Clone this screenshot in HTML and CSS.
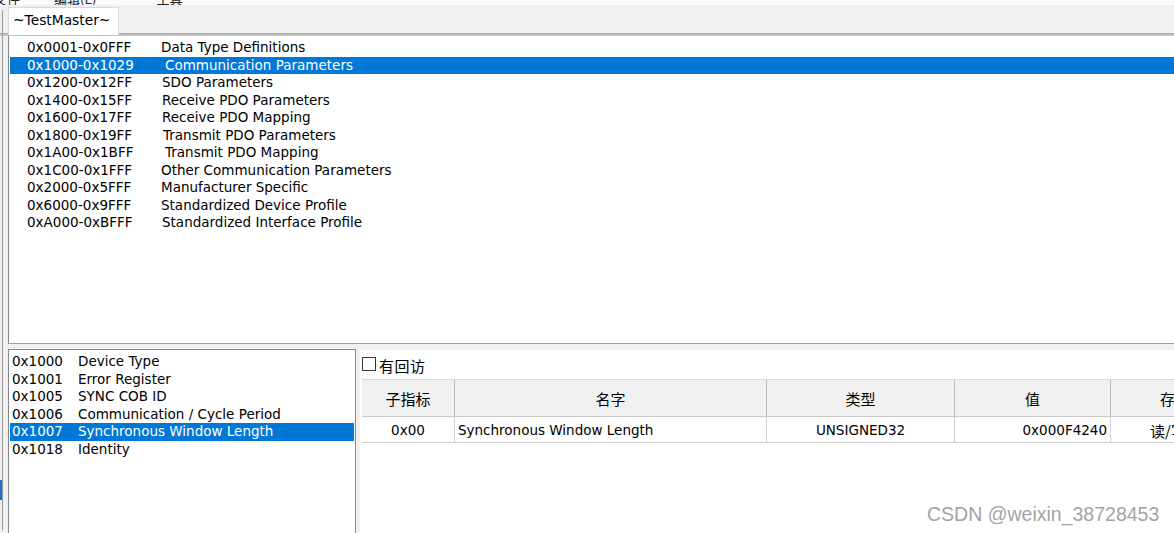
FILE: index.html
```html
<!DOCTYPE html>
<html>
<head>
<meta charset="utf-8">
<link rel="stylesheet" href="styles.css">
</head>
<body>
<div class="menubar"><span class="m1">文件</span><span class="m2">编辑(E)</span><span class="m3">工具</span></div>
<div class="tabstrip">
  <div class="tab">~TestMaster~</div>
</div>
<div class="main">
  <div class="gutter"><div class="gline"></div><div class="gblue"></div></div>
  <div class="content">
    <div class="upper">
      <div class="row"><span class="rng">0x0001-0x0FFF</span><span class="nm">Data Type Definitions</span></div>
      <div class="row sel"><span class="rng">0x1000-0x1029</span><span class="nm s4">Communication Parameters</span></div>
      <div class="row"><span class="rng">0x1200-0x12FF</span><span class="nm s1">SDO Parameters</span></div>
      <div class="row"><span class="rng">0x1400-0x15FF</span><span class="nm s1">Receive PDO Parameters</span></div>
      <div class="row"><span class="rng">0x1600-0x17FF</span><span class="nm s1">Receive PDO Mapping</span></div>
      <div class="row"><span class="rng">0x1800-0x19FF</span><span class="nm s2">Transmit PDO Parameters</span></div>
      <div class="row"><span class="rng">0x1A00-0x1BFF</span><span class="nm s4">Transmit PDO Mapping</span></div>
      <div class="row"><span class="rng">0x1C00-0x1FFF</span><span class="nm">Other Communication Parameters</span></div>
      <div class="row"><span class="rng">0x2000-0x5FFF</span><span class="nm">Manufacturer Specific</span></div>
      <div class="row"><span class="rng">0x6000-0x9FFF</span><span class="nm">Standardized Device Profile</span></div>
      <div class="row"><span class="rng">0xA000-0xBFFF</span><span class="nm s1">Standardized Interface Profile</span></div>
    </div>
    <div class="lower">
      <div class="objlist">
        <div class="orow"><span class="code">0x1000</span><span>Device Type</span></div>
        <div class="orow"><span class="code">0x1001</span><span>Error Register</span></div>
        <div class="orow"><span class="code">0x1005</span><span>SYNC COB ID</span></div>
        <div class="orow"><span class="code">0x1006</span><span>Communication / Cycle Period</span></div>
        <div class="orow sel"><span class="code">0x1007</span><span>Synchronous Window Length</span></div>
        <div class="orow"><span class="code">0x1018</span><span>Identity</span></div>
      </div>
      <div class="detail">
        <label class="check"><span class="box"></span><span class="cjk">有回访</span></label>
        <div class="table">
          <div class="thead">
            <div class="c c1 cjk">子指标</div>
            <div class="c c2 cjk">名字</div>
            <div class="c c3 cjk">类型</div>
            <div class="c c4 cjk">值</div>
            <div class="c c5 cjk">存取权限</div>
          </div>
          <div class="trow">
            <div class="c c1">0x00</div>
            <div class="c c2 left">Synchronous Window Length</div>
            <div class="c c3">UNSIGNED32</div>
            <div class="c c4 right">0x000F4240</div>
            <div class="c c5 cjk rw">读/写</div>
          </div>
        </div>
        <div class="watermark">CSDN @weixin_38728453</div>
      </div>
    </div>
  </div>
</div>
</body>
</html>
```

FILE: styles.css
```css
html, body {
  margin: 0;
  padding: 0;
  width: 1174px;
  height: 533px;
  overflow: hidden;
  background: #f0f0f0;
  font-family: "DejaVu Sans", sans-serif;
  font-size: 13.5px;
  color: #000;
}
.cjk {
  font-family: "Noto Sans CJK SC", sans-serif;
}
.menubar {
  height: 5px;
  background: #fafafa;
  overflow: hidden;
  position: relative;
  font-family: "Noto Sans CJK SC", sans-serif;
  font-size: 13px;
  line-height: 13px;
  color: #222;
}
.menubar span {
  display: inline-block;
  margin-top: -8px;
  vertical-align: top;
}
.m1 { margin-left: -6px; }
.m2 { margin-left: 34px; }
.m3 { margin-left: 60px; }
.tabstrip {
  height: 29px;
  background: #f0f0f0;
  border-bottom: 2px solid #c3c3c3;
  position: relative;
  box-shadow: inset 0 -1px 0 #a9a9b0;
}
.tab {
  position: absolute;
  left: 8px;
  top: 2px;
  width: 111px;
  height: 28px;
  background: #fff;
  border: 1px solid #d9d9d9;
  border-bottom: none;
  box-sizing: border-box;
  padding-left: 4px;
  line-height: 25px;
  font-size: 13.8px;
  z-index: 2;
}
.main {
  display: flex;
  height: 497px;
}
.gutter {
  width: 8px;
  position: relative;
  flex: none;
}
.gline {
  position: absolute;
  left: 2px;
  top: -26px;
  width: 1px;
  height: 520px;
  background: #9a9a9a;
}
.gblue {
  position: absolute;
  left: 0;
  top: 444px;
  width: 2px;
  height: 20px;
  background: #1e72c8;
}
.content {
  flex: 1;
  display: flex;
  flex-direction: column;
  gap: 5px;
  min-width: 0;
}
.upper {
  height: 308px;
  box-sizing: border-box;
  background: #fff;
  border-left: 1px solid #828790;
  border-bottom: 1px solid #a0a0a0;
  padding: 3px 0 0 1px;
  flex: none;
}
.row {
  height: 17.5px;
  line-height: 17.5px;
  padding-left: 17px;
  white-space: nowrap;
  display: flex;
}
.row.sel, .orow.sel {
  background: #0078d7;
  color: #fff;
}
.rng {
  width: 134px;
  flex: none;
}
.nm.s1 { margin-left: 1px; }
.nm.s2 { margin-left: 2px; }
.nm.s4 { margin-left: 4px; }
.lower {
  flex: 1;
  display: flex;
  gap: 4px;
  min-height: 0;
}
.objlist {
  width: 348px;
  flex: none;
  box-sizing: border-box;
  background: #fff;
  border: 1px solid #828790;
  border-bottom: none;
  padding: 3px 1px 0 1px;
}
.orow {
  height: 17.5px;
  line-height: 17.5px;
  padding-left: 2px;
  display: flex;
  white-space: nowrap;
}
.code {
  width: 66px;
  flex: none;
}
.detail {
  flex: 1;
  background: #fff;
  margin-top: 1px;
  padding-left: 2px;
  position: relative;
  min-width: 0;
  overflow: hidden;
}
.check {
  display: flex;
  align-items: center;
  height: 29px;
  font-size: 15px;
  gap: 3px;
}
.check .cjk {
  margin-top: 1px;
  letter-spacing: 0.5px;
}
.box {
  width: 14px;
  height: 14px;
  border: 1px solid #333;
  background: #fff;
  box-sizing: border-box;
  margin-top: -2px;
}
.table {
  width: 900px;
}
.thead, .trow {
  display: flex;
  white-space: nowrap;
}
.thead {
  height: 38px;
  background: #f0f0f0;
  border-top: 1px solid #d8d8d8;
  border-bottom: 1px solid #c8c8c8;
  box-sizing: border-box;
  font-size: 15px;
}
.trow {
  height: 26px;
  border-bottom: 1px solid #d0d0d0;
  box-sizing: border-box;
}
.trow .c {
  padding-top: 1px;
}
.c {
  box-sizing: border-box;
  border-right: 1px solid #c8c8c8;
  display: flex;
  align-items: center;
  justify-content: center;
  flex: none;
  overflow: hidden;
}
.thead .c { border-right-color: #bdbdbd; }
.trow .c { border-right-color: #d0d0d0; }
.c1 { width: 93px; }
.c2 { width: 312px; }
.c3 { width: 188px; }
.c4 { width: 156px; }
.c5 { width: 150px; justify-content: flex-start; padding-left: 49px; }
.c.left { justify-content: flex-start; padding-left: 3px; }
.c.right { justify-content: flex-end; padding-right: 3px; }
.c5.rw { padding-left: 39px; font-size: 15px; }
.watermark {
  position: absolute;
  left: 567px;
  top: 153px;
  font-family: "Liberation Sans", Arial, sans-serif;
  font-size: 19.5px;
  color: #a3a3a3;
  white-space: nowrap;
}
```
